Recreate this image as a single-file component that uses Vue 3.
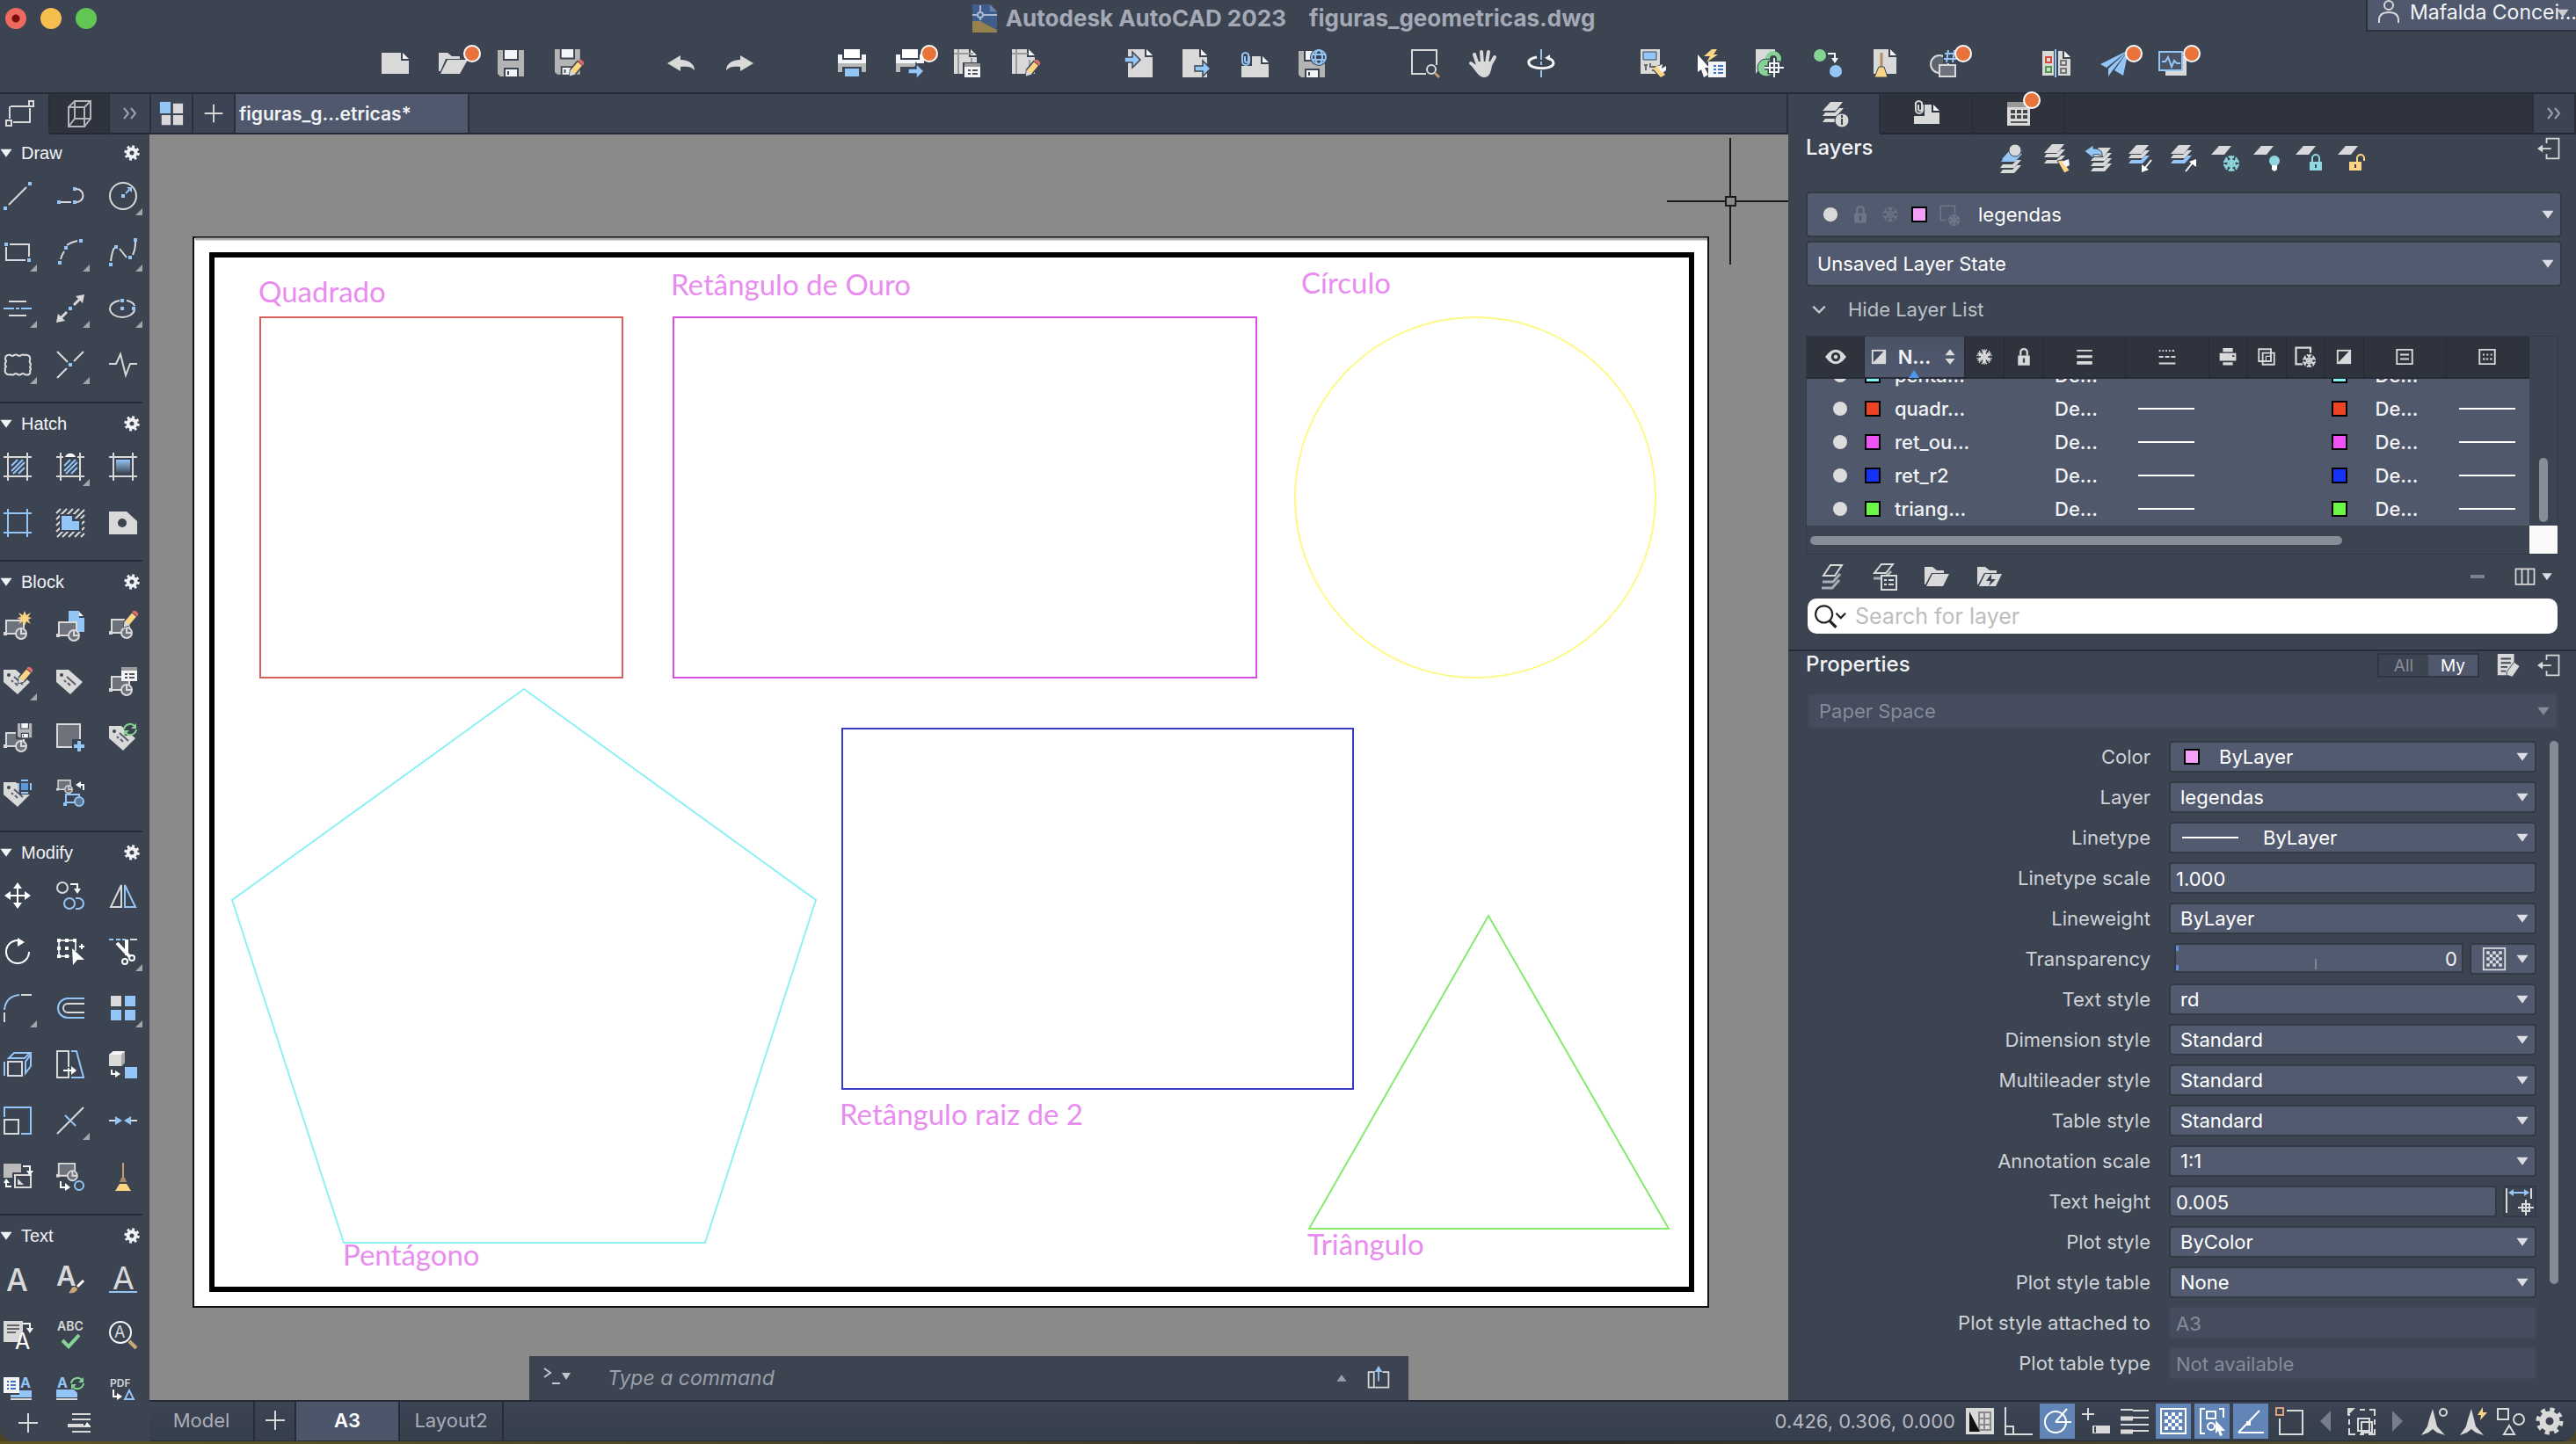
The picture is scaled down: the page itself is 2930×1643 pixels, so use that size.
<template>
  <div class="app">
    <header class="header">
      <div class="titlebar">
        <div class="lights">
          <button class="light red" aria-label="Close"></button>
          <button class="light yellow" aria-label="Minimize"></button>
          <button class="light green" aria-label="Zoom"></button>
        </div>
        <h1 class="title">
          <Icon name="dwg" />
          <span>Autodesk AutoCAD 2023</span>
          <span class="file">figuras_geometricas.dwg</span>
        </h1>
        <button class="user">
          <Icon name="user" />
          Mafalda Concei...
          <Icon name="down" class="user-arrow" />
        </button>
      </div>
      <nav class="toolbar">
        <div v-for="(group, i) in toolbar" :key="i" class="group">
          <button v-for="t in group" :key="t" class="tool" :aria-label="t">
            <Icon :name="t" />
            <span v-if="badges.includes(t)" class="badge"></span>
          </button>
        </div>
      </nav>
    </header>

    <div class="strip">
      <div class="strip-left">
        <button class="cell active" aria-label="Drafting"><Icon name="drafting" /></button>
        <button class="cell dark" aria-label="Modeling"><Icon name="modeling" /></button>
        <button class="cell more" aria-label="More"><Icon name="more" /></button>
      </div>
      <div class="strip-files">
        <button class="cell square" aria-label="Start"><Icon name="start" /></button>
        <button class="cell square" aria-label="New tab"><Icon name="plus" /></button>
        <button class="cell file-tab">figuras_g...etricas*</button>
        <div class="cell filler"></div>
      </div>
      <div class="strip-right">
        <button class="cell panel-tab active" aria-label="Layers"><Icon name="layersTab" /></button>
        <button class="cell panel-tab dark" aria-label="References"><Icon name="refsTab" /></button>
        <button class="cell panel-tab dark" aria-label="Content">
          <Icon name="contentTab" />
          <span class="badge tab-badge"></span>
        </button>
        <div class="cell filler dark"></div>
        <button class="cell more" aria-label="More"><Icon name="more" /></button>
      </div>
    </div>

    <div class="body">
      <aside class="sidebar">
        <section v-for="s in sections" :key="s.title" class="section">
          <div class="section-head">
            <button class="section-toggle" @click="s.open = !s.open">
              <Icon name="down" />{{ s.title }}
            </button>
            <button class="gear" aria-label="Settings"><Icon name="gear" /></button>
          </div>
          <div v-show="s.open" class="tools">
            <button v-for="t in s.tools" :key="t" class="tool" :aria-label="t">
              <Icon :name="t" />
              <span v-if="flyouts.includes(t)" class="flyout"></span>
            </button>
          </div>
        </section>
      </aside>

      <main class="canvas">
        <svg class="drawing" viewBox="0 0 1864 1440">
          <g transform="translate(-170 -153)">
            <rect x="220" y="270" width="1723" height="1217" fill="#fff" stroke="#111" stroke-width="2" />
            <path d="M222 272h1720" stroke="#b0aeb0" stroke-width="3" />
            <rect x="241" y="290" width="1683" height="1177" fill="none" stroke="#000" stroke-width="6" />
            <g fill="none" stroke-width="2">
              <rect x="296" y="361" width="412" height="410" stroke="#d9605a" />
              <rect x="766" y="361" width="663" height="410" stroke="#d94fe0" />
              <circle cx="1678" cy="566" r="205" stroke="#fdf98a" />
              <path d="M596 784L928 1024L802 1414H391L264 1024z" stroke="#8df1f4" />
              <rect x="958" y="829" width="581" height="410" stroke="#3a3cc4" />
              <path d="M1693 1042L1898 1398H1489z" stroke="#86ea6c" />
            </g>
            <g class="legend">
              <text v-for="l in legends" :key="l.text" :x="l.x" :y="l.y">{{ l.text }}</text>
            </g>
            <g fill="none" stroke="#1b1b1b" stroke-width="2">
              <path d="M1896 229h67M1974 229h60M1968 157v67M1968 234v67" />
              <rect x="1963" y="224" width="11" height="10" />
            </g>
          </g>
        </svg>
        <form class="command" @submit.prevent>
          <Icon name="prompt" class="prompt" />
          <input v-model="command" placeholder="Type a command" aria-label="Command" />
          <Icon name="up" class="cmd-up" />
          <Icon name="popout" />
        </form>
      </main>

      <aside class="panel">
        <div class="panel-head layers-head">
          <h2>Layers</h2>
          <div class="layer-tools">
            <button v-for="t in layerTools" :key="t" class="tool" :aria-label="t"><Icon :name="t" /></button>
          </div>
          <button class="pin" aria-label="Undock"><Icon name="undock" /></button>
        </div>

        <div class="combo tall">
          <Icon name="dot" class="st" />
          <Icon name="lockDim" class="st wide" />
          <Icon name="snowDim" class="st" />
          <span class="swatch" :style="{ background: '#f4a0f8' }"></span>
          <Icon name="vpDim" class="st vp" />
          <select aria-label="Current layer"><option>legendas</option></select>
          <Icon name="down" class="arrow" />
        </div>
        <div class="combo tall state">
          <select aria-label="Layer state"><option>Unsaved Layer State</option></select>
          <Icon name="down" class="arrow" />
        </div>
        <button class="hide-list"><Icon name="chevron" />Hide Layer List</button>

        <div class="layer-list">
          <table>
            <thead>
              <tr>
                <th v-for="c in columns" :key="c" :class="c" :aria-label="c">
                  <Icon :name="c" />
                  <template v-if="c === 'colName'"><span>N...</span><Icon name="sort" /></template>
                </th>
              </tr>
            </thead>
            <tbody>
              <tr v-for="l in layers" :key="l.name">
                <td class="vis"><i class="dot"></i></td>
                <td class="name"><span class="swatch" :style="{ background: l.color }"></span>{{ l.name }}</td>
                <td></td>
                <td></td>
                <td class="de">De...</td>
                <td class="ln"><i class="line"></i></td>
                <td></td>
                <td></td>
                <td></td>
                <td class="sw"><span class="swatch" :style="{ background: l.color }"></span></td>
                <td class="de">De...</td>
                <td class="ln"><i class="line"></i></td>
              </tr>
            </tbody>
          </table>
          <div class="vscroll"><i></i></div>
          <div class="hscroll"><i></i></div>
          <div class="corner"></div>
        </div>

        <div class="list-actions">
          <button class="tool" aria-label="New layer"><Icon name="newLayer" /></button>
          <button class="tool" aria-label="Layer settings"><Icon name="layerSettings" /></button>
          <button class="tool" aria-label="New group"><Icon name="folder" /></button>
          <button class="tool" aria-label="New dynamic group"><Icon name="folderFlash" /></button>
          <button class="tool minus" aria-label="Remove"><Icon name="minus" /></button>
          <button class="cols" aria-label="Columns"><Icon name="cols" /><Icon name="down" class="arrow" /></button>
        </div>

        <div class="search">
          <Icon name="search" />
          <input v-model="query" type="text" placeholder="Search for layer" aria-label="Search for layer" />
        </div>

        <div class="panel-head props-head">
          <h2>Properties</h2>
          <div class="toggle">
            <button>All</button>
            <button class="on">My</button>
          </div>
          <button class="tool" aria-label="Customize"><Icon name="customize" /></button>
          <button class="pin" aria-label="Undock"><Icon name="undock" /></button>
        </div>
        <div class="combo off space">
          <select disabled aria-label="Selection"><option>Paper Space</option></select>
          <Icon name="down" class="arrow" />
        </div>

        <div class="props">
          <div class="prop-list">
            <div v-for="(p, i) in props" :key="p.label" class="prop">
              <label :for="'prop-' + i">{{ p.label }}</label>
              <div class="field">
                <div v-if="p.kind === 'select'" class="combo">
                  <span v-if="p.swatch" class="swatch lead" :style="{ background: p.swatch }"></span>
                  <i v-if="p.line" class="line lead"></i>
                  <select :id="'prop-' + i"><option>{{ p.value }}</option></select>
                  <Icon name="down" class="arrow" />
                </div>
                <template v-else-if="p.kind === 'range'">
                  <div class="slider">
                    <input :id="'prop-' + i" v-model="transparency" type="range" min="0" max="90" />
                    <output>{{ transparency }}</output>
                  </div>
                  <button class="checker" aria-label="Transparency mode">
                    <Icon name="checker" /><Icon name="down" class="arrow" />
                  </button>
                </template>
                <template v-else>
                  <input :id="'prop-' + i" v-model="p.value" class="text" type="text" :disabled="p.off" />
                  <button v-if="p.pick" class="pick" aria-label="Pick distance"><Icon name="pickDist" /></button>
                </template>
              </div>
            </div>
          </div>
          <div class="props-scroll"><i></i></div>
        </div>
      </aside>
    </div>

    <footer class="footer">
      <div class="side-actions">
        <button class="tool" aria-label="Add tool set"><Icon name="plusBig" /></button>
        <button class="tool" aria-label="Menu"><Icon name="list" /></button>
      </div>
      <div class="status">
        <button class="layout model">Model</button>
        <button class="layout add" aria-label="New layout"><Icon name="plus" /></button>
        <button class="layout current">A3</button>
        <button class="layout">Layout2</button>
        <span class="coords">0.426, 0.306, 0.000</span>
        <div class="modes">
          <button
            v-for="m in modes"
            :key="m"
            class="mode"
            :class="{ on: activeModes.includes(m), small: m === 'prev' || m === 'next' }"
            :aria-label="m"
          >
            <Icon :name="m" />
          </button>
        </div>
      </div>
    </footer>
    <div class="wallpaper"></div>
  </div>
</template>

<script setup>
import { h, ref } from 'vue'

// palette shared by the icons
const G = '#d9d9d9'
const B = '#94c5f7'
const W = '#f4f5f8'
const Y = '#fbd584'
const N = '#3c4452'
const GR = '#86d493'
const C = '#8fd8e0'

const para = (x, y, c = G) => `<path d="M${x + 9} ${y}h14l-8 10h-15z" fill="${c}"/>`
const fold = (x, y, c = G) =>
  `<path d="M${x + 19} ${y}h5l-8 9h-16l3-4h11z" fill="${c}"/>`
const page = (x, y, w, hh, c = G) =>
  `<path d="M${x} ${y}h${w - 9}v9h9v${hh - 9}h-${w}z" fill="${c}"/><path d="M${x + w - 7} ${y}l7 7h-7z" fill="${W}"/>`
const pencil = (x, y) =>
  `<g transform="translate(${x} ${y}) rotate(40)"><path d="M-4 0h8v13l-4 6l-4-6z" fill="${Y}" stroke="${N}" stroke-width="1.5"/><path d="M-4 13h8l-4 6z" fill="${G}"/><path d="M-4 0a4 4 0 0 1 8 0z" fill="#dd6b66"/></g>`
const sq = (x, y, c = B) => `<path d="M${x - 2} ${y - 2}h4v4h-4z" fill="${c}"/>`
const line = (d, c = G, w = 2) => `<path d="${d}" fill="none" stroke="${c}" stroke-width="${w}"/>`
// six-armed snowflake, each arm with a small fork
const snow = (x, y, r, c) =>
  [0, 60, 120, 180, 240, 300]
    .map((a) => `<path transform="translate(${x} ${y}) rotate(${a})" d="M0 0V-${r}M-${r * 0.35} -${r * 0.95}L0 -${r * 0.6}L${r * 0.35} -${r * 0.95}" fill="none" stroke="${c}" stroke-width="2"/>`)
    .join('') + `<circle cx="${x}" cy="${y}" r="${r * 0.42}" fill="none" stroke="${c}" stroke-width="2"/>`
const lock = (x, y, c, open = 0) =>
  `<path d="M${x} ${y + 8}h14v10h-14z" fill="${c}"/>` +
  line(open ? `M${x + 9} ${y + 8}v-4a4 4 0 0 1 8 0v3` : `M${x + 3} ${y + 8}v-4a4 4 0 0 1 8 0v4`, c) +
  line(`M${x + 7} ${y + 11}v4`, N)
const bigLock = (c) =>
  `<path d="M7 14h18v15H7z" fill="${c}"/>` + line('M11 14V9a5 5 0 0 1 10 0v5', c, 3) + line('M16 18v7', N, 3)
const floppy = (x, y, s = 1) =>
  `<g transform="translate(${x} ${y}) scale(${s})"><path d="M0 0h30v30H3l-3-3z" fill="#b4b4b4"/><path d="M6 0h18v12H6zM7 20h17v10H7z" fill="${N}"/><path d="M8 0h14v10H8zM9 22h13v8H9z" fill="${W}"/><path d="M11 24h2v4h-2z" fill="${N}"/></g>`
const printer = (y) =>
  `<path d="M0 6h32v20H0z" fill="${W}"/><path d="M0 16h32v10H0z" fill="#b8b8b8"/><path d="M5 0h22v12H5zM5 20h22v12H5z" fill="${N}"/><path d="M7 0h18v10H7z" fill="#fff"/>` + y
const arrowR = (x, y, c = B) =>
  `<path d="M${x} ${y - 3}h9v-6l9 9l-9 9v-6h-9z" fill="${c}" stroke="${N}" stroke-width="1.5"/>`
const block = (x, y) =>
  `<g transform="translate(${x} ${y})"><path d="M3 1h20v15H3z" fill="#6d727d" stroke="${G}" stroke-width="2"/><path d="M0 14h4v4H0z" fill="${G}"/><circle cx="20" cy="16" r="6" fill="#6d727d" stroke="${G}" stroke-width="2"/>${line('M20 10v6h6', G)}</g>`
const tag =
  `<path d="M0 3h14L30 17L16 31L0 17z" fill="${G}"/><circle cx="6" cy="9" r="2" fill="${N}"/>` +
  line('M12 11l10 9M9 15l2 2M13 18l3 3', '#5b5f68')
const hashBox = (c = G) => line('M5 0v32M27 0v32M0 5h32M0 27h32', c)
const hatch = line('M9 15l7-7M9 21l13-13M11 24l13-13M17 24l7-7', B, 2)
const clip = (x, y, c) =>
  line(`M${x + 9} ${y + 6}v6a4 4 0 0 1-8 0v-8a4 4 0 0 1 7 0v7a2 2 0 0 1-4 0v-5`, c)
const listBox = (x, y) =>
  `<path d="M${x} ${y}h18v16h-18z" fill="${W}"/><path d="M${x} ${y}h18v4h-18z" fill="#9a9a9a"/>` +
  line(`M${x + 4} ${y + 8}h3M${x + 9} ${y + 8}h6M${x + 4} ${y + 12}h3M${x + 9} ${y + 12}h6`, '#555')
const turn = (x, y) =>
  line(`M${x} ${y}h8v6`, W) + `<path d="M${x + 4} ${y + 5}h8l-4 6z" fill="${W}"/>`
const glyph = (x, y, size, t, c = G, extra = '') =>
  `<text x="${x}" y="${y}" font-family="Inter, sans-serif" font-size="${size}" fill="${c}" ${extra}>${t}</text>`
const compass = `<path d="M15 2l3 12l2 8l9 10l-9-3l-5-4l-5 4l-8 3l7-10l2-8z" fill="${G}"/>`
const sync = (x, y) =>
  `<g transform="translate(${x} ${y})">${line('M1 7a7 7 0 0 1 12-4M15 7a7 7 0 0 1-12 4', GR)}<path d="M15 0v6H9zM1 14V8h6z" fill="${GR}"/></g>`

const icons = {
  dwg: `<path d="M2 1h20l8 8v12H2z" fill="#3f5d8c"/><path d="M22 1l8 8h-8z" fill="#6c84a6"/><path d="M2 20h9l19 10v3H2z" fill="#95824f"/><path d="M14 21h16v9z" fill="#3f5d8c"/>${line('M11 2v17M2 13h28', '#a8b9d0')}<circle cx="11" cy="13" r="3" fill="#3f5d8c" stroke="#a8b9d0" stroke-width="2"/>`,
  user: `<circle cx="16" cy="8" r="5" fill="none" stroke="${G}" stroke-width="2"/>${line('M5 28v-3c0-6 4-9 11-9s11 3 11 9v3')}`,
  down: `<path d="M1 6h30L16 27z" fill="currentColor"/>`,
  up: `<path d="M1 26h30L16 6z" fill="currentColor"/>`,
  more: line('M9 10l5 6l-5 6M17 10l5 6l-5 6', '#9da1aa'),
  New: page(1, 4, 31, 24),
  Open: `<path d="M0 4h10l5 4h9v3H8L2 25H0z" fill="${G}"/><path d="M10 12h23l-9 16H2z" fill="${G}"/>`,
  Save: floppy(1, 1),
  'Save as': floppy(0, 0, 0.96) + pencil(29, 16),
  Undo: `<path d="M0 16L15 7v5c10 0 16 5 16 12c-3-4-8-5-16-4v5z" fill="${G}"/>`,
  Redo: `<path d="M32 16L17 7v5C7 12 1 17 1 24c3-4 8-5 16-4v5z" fill="${G}"/>`,
  Print: printer(`<path d="M8 22h16v9H8z" fill="${B}"/>`),
  'Batch plot': printer(`<path d="M24 16h8v16H12z" fill="${N}"/>` + arrowR(14, 25)),
  'Page setup': page(0, 0, 26, 28) + line('M0 5h22M5 0v28M20 10v6', '#9a9a9a') + `<path d="M10 15h22v17H10z" fill="${N}"/>` + listBox(12, 16),
  'Edit sheet': page(0, 0, 26, 28) + line('M0 5h18M5 0v28M20 12v14', '#9a9a9a') + pencil(28, 16),
  Import: page(4, 0, 28, 32) + arrowR(0, 12),
  Export: page(0, 0, 28, 32) + arrowR(14, 22),
  Attach: page(1, 8, 31, 24) + `<path d="M0 0h13v19H0z" fill="${N}"/>` + clip(1, 2, B),
  'Save web': floppy(0, 2) + `<circle cx="23" cy="9" r="10" fill="${N}"/><circle cx="23" cy="9" r="8" fill="none" stroke="${B}" stroke-width="2"/><ellipse cx="23" cy="9" rx="4" ry="8" fill="none" stroke="${B}" stroke-width="2"/>${line('M15 6h16M15 12h16', B)}`,
  'Zoom window': line('M17 28H1V1h28v17') + `<circle cx="23" cy="23" r="5" fill="none" stroke="${G}" stroke-width="2"/>` + line('M27 27l5 5', '#c69c6d', 3),
  Pan: `<g stroke="${G}" stroke-width="4" stroke-linecap="round" fill="none"><path d="M10 18L6 6M15 16L14 3M20 16L22 3M24 18L29 9M10 22L2 16"/></g><path d="M8 14h17l1 4c-1 8-3 14-9 14c-5 0-8-5-15-14l2-2l5 3z" fill="${G}"/>`,
  Orbit: line('M16 0v12M16 14v4M16 24v8', B) + line('M11 9C4 10 1 13 2 16c1 7 27 8 28 0c0-3-3-5-7-6', W, 3) + `<path d="M20 10l6-4v7z" fill="${W}"/>`,
  Calculator: `<path d="M1 0h22v28H1z" fill="${G}"/><path d="M4 3h15v9H4z" fill="${B}" stroke="${N}"/>${line('M5 18h4M7 18v6M12 16v4h6M14 24h5', '#666')}<path d="M16 20l12-4l4 4l-9 12l-7-7z" fill="${N}"/><path d="M15 22l6-4l8 11l-5 3z" fill="${Y}"/><path d="M20 20l6-3l-1 5l5-3v5l-4 3z" fill="${W}"/>`,
  'Quick select': `<path d="M16 0h6l-4 6h5L10 15l4-7H7z" fill="${Y}"/><path d="M12 14h20v18H12z" fill="${W}"/>${line('M18 19h3M23 19h6M18 23h3M23 23h6M18 27h3M23 27h6', '#3f74c4')}<path d="M0 6l13 15H8l4 8l-5 3l-3-9l-4 3z" fill="#fff"/>`,
  Point: `<path d="M0 0h22v10H12L0 28z" fill="${G}"/><circle cx="20" cy="11" r="9" fill="${GR}"/><circle cx="12" cy="21" r="10" fill="${GR}" stroke="${N}"/><circle cx="20" cy="11" r="4" fill="${N}"/>${line('M21 10v22M10 21h22M16 16h10v10H16z', N, 5)}${line('M21 10v22M10 21h22M16 16h10v10H16z', W)}`,
  Match: `<circle cx="7" cy="7" r="7" fill="${GR}"/><circle cx="25" cy="25" r="7" fill="${B}"/>` + turn(16, 5),
  Purge: page(2, 0, 26, 28) + line('M11 4v16', '#b28b5e', 3) + `<path d="M8 20h6l4 12H3z" fill="${Y}" stroke="${N}"/>`,
  Count: `<circle cx="11" cy="17" r="10" fill="#5d6470" stroke="${G}" stroke-width="2"/><path d="M11 18h18v13H11z" fill="#6d727d" stroke="${G}" stroke-width="2"/><path d="M15 0h17v16H15z" fill="${N}"/>${line('M21 1l-2 14M28 1l-2 14M17 5h14M16 11h14', B)}`,
  Compare: `<path d="M0 2h13v28H0z" fill="${G}"/>` + page(18, 2, 14, 28) + line('M15 0v32', B) + line('M4 9h6v6H4z', '#d64a3c') + line('M4 20h6v6H4z', '#4d9c49') + line('M21 13h6v5h-6zM21 22h6v5h-6z', '#777'),
  Share: `<path d="M32 1L0 17l7 4zM32 1L9 22v9l5-7zM32 1L16 24l10 6z" fill="${B}"/>`,
  Activity: `<path d="M8 8h24v22H8z" fill="${G}"/><path d="M1 3h26v21H1z" fill="#4a5466" stroke="${B}" stroke-width="2"/>${line('M4 14h4l3-5l4 11l3-7l3 3h4', B)}`,
  drafting: line('M5 8h21M8 26h19V10M4 8v14') + line('M0 24h6v6H0zM26 2h5v6h-5z'),
  modeling: line('M4 9h18v22H4zM11 2h18v20H11zM4 9l7-7M22 9l7-7M22 31l7-9M4 31l7-9', '#b3b5ba'),
  start: `<path d="M2 2h13v14H2z" fill="${B}"/><path d="M18 4h12v12H18zM4 18h11v12H4zM18 18h12v12H18z" fill="${G}"/>`,
  plus: line('M16 5v22M5 16h22'),
  layersTab: para(3, 3) + fold(3, 10) + fold(3, 17) + `<ellipse cx="25" cy="24" rx="8" ry="8" fill="${G}" stroke="${N}"/>` + line('M25 18v3M25 22v7', N),
  refsTab: page(2, 6, 29, 22) + `<path d="M1 0h13v19H1z" fill="#2f333e"/>` + clip(3, 0, G),
  contentTab: `<path d="M3 3h26v27H3z" fill="${G}"/><path d="M3 3h26v6H3z" fill="#999"/>${line('M7 14h5M14 14h5M21 14h5M7 20h5M14 20h5M21 20h5', '#444', 4)}${line('M7 26h19', '#555')}`,
  gear: `<circle cx="16" cy="16" r="8" fill="none" stroke="currentColor" stroke-width="7"/><circle cx="16" cy="16" r="13" fill="none" stroke="currentColor" stroke-width="5" stroke-dasharray="5.1 5.1"/>`,
  prompt: line('M3 5l7 5l-7 5M12 22h9', '#c0c4cc') + `<path d="M23 10h10l-5 8z" fill="#c0c4cc"/>`,
  popout: line('M11 8H3v20h26V8h-8M10 8v20', G) + line('M16 20V6', B) + `<path d="M11 8h10l-5-8z" fill="${B}"/>`,

  Line: line('M6 26L26 6') + sq(2, 30) + sq(30, 2),
  Polyline: line('M5 23h12M24 8h-1a7 7 0 0 1 0 15h-1') + sq(3, 23) + sq(21, 23) + sq(21, 8),
  Circle: `<circle cx="16" cy="16" r="15" fill="none" stroke="${G}" stroke-width="2"/>` + sq(16, 16) + line('M19 13l5-5', B) + `<path d="M20 6h6v6z" fill="${B}"/>`,
  Rectangle: line('M7 7h22v14M25 25H3V10') + sq(3, 7) + sq(29, 25),
  Arc: line('M5 24c1-4 2-6 4-9M12 8c4-3 7-4 12-5') + sq(4, 28) + sq(11, 11) + sq(28, 3),
  Spline: line('M2 26c1-7 2-12 4-15M12 12l8 10M27 19c2-4 3-9 3-15') + sq(2, 30) + sq(8, 10) + sq(24, 22) + sq(30, 2),
  Centerline: line('M6 8h20M6 24h20') + line('M0 16h12M14 16h4M20 16h12', B),
  Xline: line('M4 28l8-8M20 12l8-8', G, 3) + `<path d="M0 32l2-10l8 8zM32 0l-2 10l-8-8z" fill="${G}"/>` + sq(16, 16),
  Ellipse: line('M12 7C5 8 1 12 1 16c0 6 7 10 14 10s13-4 14-8M20 7c5 1 8 3 9 6') + sq(15, 7) + sq(15, 16) + sq(28, 16),
  Cloud: line('M3 6q2-2 5-1q2 2 4 0q3-1 4 0q2 2 4 0q3-1 4 0q3-1 5 1q2 2 1 5q-1 2 1 4q0 2-1 4q2 2 0 4q1 3-1 4q-2 1-5 0q-2-2-4 0q-2 1-4 0q-2-2-4 0q-2 1-4 0q-3 1-5-1q-2-2-1-4q-1-2 1-4q-2-2-1-4q2-2 0-4q0-3 1-4z'),
  Trimline: line('M1 1l12 12M1 31l11-11M20 12L31 1') + sq(16, 16),
  Breakline: line('M0 15h8l5-11l6 24l5-13h8'),
  Hatch: hashBox() + hatch,
  'Hatch edit': hashBox() + hatch + `<path d="M8 2h16v5H8z" fill="${N}"/><path d="M11 3c3-3 7-3 10 0l1 2H10z" fill="#fff"/>`,
  Gradient: `<defs><linearGradient id="grad" x2="0" y2="1"><stop stop-color="${B}"/><stop offset="1" stop-color="${N}"/></linearGradient></defs><path d="M8 8h16v16H8z" fill="url(#grad)"/>` + hashBox(),
  Boundary: hashBox(B),
  Superhatch: `<g>${line('M0 5l5-5M0 12L12 0M0 19L19 0M0 26L26 0M1 32L32 1M7 32L32 7M14 32L32 14M21 32L32 21M28 32l4-4')}</g><path d="M4 6h17v5h8v15H4z" fill="${N}"/><path d="M6 8h12v6h8v10H6z" fill="${B}"/>`,
  Region: `<path d="M0 3h20l12 11v15H0z" fill="${G}"/><circle cx="15" cy="16" r="5" fill="${N}"/>`,
  'Create block': block(0, 10) + `<path d="M24 0l2 5l5-3l-3 5l4 1l-4 2l3 5l-5-3l-2 5l-2-5l-5 3l3-5l-5-2l5-1l-3-5l5 3z" fill="${Y}"/>`,
  'Insert block': `<path d="M14 0h12v8h6v16H14z" fill="${B}"/><path d="M26 1l5 5h-5z" fill="${W}"/>` + block(0, 12),
  'Edit block': block(0, 9) + pencil(29, 4),
  'Edit attribute': tag + pencil(29, 4),
  Attribute: tag,
  'Block manager': block(0, 10) + listBox(14, 0),
  'Write block': block(0, 10) + `<path d="M14 0h18v18H14z" fill="${N}"/>` + floppy(16, 0, 0.54),
  'Block base': `<path d="M1 1h26v26H1z" fill="#6d727d" stroke="${G}" stroke-width="2"/><path d="M18 18h14v14H18z" fill="${N}"/>` + line('M26 20v12M20 26h12', B, 4),
  'Sync attribute': tag + `<path d="M16 0h16v14H18z" fill="${N}"/>` + sync(16, 0),
  'Attribute display': tag + `<path d="M16 0h16v17H18z" fill="${N}"/><path d="M20 4h8v8h-8z" fill="#5c98d6"/>` + line('M20 1h8M20 15h8M17 4v8M31 4v8', B),
  'Replace block': `<g transform="scale(.7)">${block(0, 0)}</g><path d="M22 6l6-4v3h4v7h-2V7h-2v3z" fill="${W}"/>` + `<g transform="translate(8 16)">${line('M3 1h15v9H3z', B)}<path d="M0 10h4v4H0z" fill="${B}"/><circle cx="18" cy="9" r="5" fill="#5d7693" stroke="${B}" stroke-width="2"/></g>`,
  Move: line('M16 5v22M5 16h22', '#fff') + `<path d="M16 1l5 7H11zM16 31l5-7H11zM1 16l7-5v10zM31 16l-7-5v10z" fill="#fff"/>`,
  Copy: `<circle cx="7" cy="7" r="6" fill="none" stroke="${G}" stroke-width="2"/><circle cx="15" cy="25" r="6" fill="none" stroke="${B}" stroke-width="2"/>` + line('M22 19h3a6 6 0 0 1 0 12h-3', B) + turn(16, 3),
  Mirror: line('M14 4v25H2z') + line('M18 4v25h12z', B),
  Rotate: line('M29 16a13 13 0 1 1-13-13', '#fff') + `<path d="M16 0l8 5l-8 5z" fill="#fff"/>`,
  Select: line('M3 3h19v12M3 3v18h12') + [[3, 3], [12, 3], [21, 3], [3, 12], [12, 12], [3, 21], [12, 21]].map(([x, y]) => sq(x, y, '#fff')).join('') + line('M29 7v6M26 10h6', '#fff') + `<path d="M18 12l14 13h-8l-5 6z" fill="#fff"/>`,
  Trim: line('M0 2h5M8 2h5M15 2h4', B) + line('M24 2h8') + `<path d="M18 2h4v18h-4z" fill="#fff"/>` + line('M9 6l15 16', '#fff', 4) + `<circle cx="18" cy="27" r="3" fill="none" stroke="#fff" stroke-width="2"/><circle cx="26" cy="23" r="3" fill="none" stroke="#fff" stroke-width="2"/>`,
  Fillet: line('M1 18C2 8 8 2 18 1', B) + line('M20 1h12M1 21v11'),
  Offset: line('M32 5H13a11 11 0 0 0 0 22h19', B) + line('M32 11H13a5 5 0 0 0 0 10h19'),
  Array: `<path d="M2 2h12v12H2z" fill="${G}"/><path d="M18 2h12v12H18zM2 18h12v12H2zM18 18h12v12H18z" fill="${B}"/>`,
  'Copy 3D': line('M5 13h16v16H5z') + line('M1 13v16M12 3h18l-6 6H6zM31 5v13l-6 8V13z', B),
  Stretch: line('M14 20v11H1V1h13v18') + line('M17 1h6l8 30H17', B) + line('M8 23h11', '#fff') + `<path d="M17 18l6 5l-6 5z" fill="#fff"/>`,
  Flatten: `<path d="M0 5l5-4h13v13l-4 4H0z" fill="${G}"/><path d="M0 5l5-4h13l-4 4z" fill="${W}"/><path d="M18 1v13l-4 4V5z" fill="#a9a9a9"/><path d="M18 19h14v13H18z" fill="${B}"/>` + line('M3 22v5h5', '#fff') + `<path d="M7 23l6 4l-6 4z" fill="#fff"/>`,
  Scale: line('M1 15h16v16H1z') + line('M1 12V1h30v30H20', B),
  Break: line('M1 31L31 1') + line('M10 10l12 12', B),
  Join: line('M0 16h8M24 16h8') + `<path d="M7 11l8 5l-8 5zM25 11l-8 5l8 5z" fill="${B}"/>`,
  'Draw order': `<path d="M0 1h20v16H0z" fill="#bbb"/><path d="M10 11h22v18H10z" fill="${N}"/>` + line('M13 14h18v14H13z') + `<path d="M16 18l7 7h-7z" fill="${G}"/>` + turn(22, 4) + line('M9 27H3v-5', '#fff') + `<path d="M0 23h7l-4-5z" fill="#fff"/>`,
  'Change space': `<g transform="scale(.92)">${block(0, 0)}</g><circle cx="26" cy="26" r="5" fill="none" stroke="${B}" stroke-width="2"/>` + line('M5 21v7h6', '#fff') + `<path d="M10 23l6 5l-6 4z" fill="#fff"/>`,
  Overkill: line('M16 0v18', '#c69c6d') + `<path d="M14 17h4l2 5h-8z" fill="#a98a66"/><path d="M12 24h8l5 8H7z" fill="${Y}"/>`,
  'Single text': glyph(3, 30, 35, 'A', G, 'font-weight="500"'),
  'Text style': glyph(0, 24, 31, 'A', G, 'font-weight="600"') + line('M24 25l7-7', '#fff', 3) + `<path d="M14 32c3-2 2-7 7-7l3 2c0 4-5 6-10 5z" fill="#c9a676"/>`,
  'Multiline text': glyph(4, 28, 36, 'A') + line('M0 31h32', B),
  'Text to mtext': `<path d="M0 0h22v24H0z" fill="${G}"/>${line('M4 5h14M4 9h14M4 13h10', '#666')}<path d="M22 12l-9 20h19z" fill="${N}"/>` + glyph(13, 32, 25, 'A', '#fff') + turn(22, 3),
  Spell: glyph(1, 11, 14, 'ABC', G, 'font-weight="600"') + line('M7 22l7 7L26 16', GR, 4),
  'Find text': `<circle cx="13" cy="13" r="12" fill="none" stroke="${W}" stroke-width="2"/>` + glyph(6, 19, 18, 'A', G) + line('M23 23l8 8', '#c9a676', 4),
  Field: `<path d="M18 15h14v8H8v-3h10z" fill="${B}"/><path d="M0 0h18v18H0z" fill="${W}"/>${line('M4 5h2M8 5h6M4 9h2M8 9h6M4 13h2M8 13h6', '#3f74c4')}` + glyph(19, 12, 16, 'A', B, 'font-weight="700"') + line('M8 25h24'),
  'Update field': `<path d="M0 14h20l4 4v5H0z" fill="${B}"/>` + glyph(1, 12, 16, 'A', B, 'font-weight="700"') + sync(16, 0) + line('M0 25h24'),
  'PDF text': glyph(1, 11, 12, 'PDF', G, 'font-weight="600"') + line('M5 14v8h6', '#fff') + `<path d="M9 18l6 4l-6 4z" fill="#fff"/>` + line('M23 15l-5 10h10z', B),

  'Layer state': fold(0, 18) + fold(0, 24) + para(2, 7, B) + fold(1, 11, B) + `<circle cx="17" cy="7" r="7" fill="${G}" stroke="${N}"/>`,
  'Match layer': para(2, 0) + fold(2, 6) + fold(2, 13) + `<path d="M17 19l6-1l8 12l-6 3z" fill="${Y}" stroke="${N}"/><path d="M22 20l8-3l1 7l-4 2z" fill="${W}"/>`,
  'Previous layer': para(7, 4) + fold(7, 10) + fold(7, 16) + fold(7, 22) + `<path d="M0 8l10-7v4c8 0 11 4 10 10c-2-3-5-4-10-3v4z" fill="${B}" stroke="${N}"/>`,
  Isolate: para(2, 1) + fold(2, 7) + fold(2, 13, B) + line('M28 18l-8 10', '#fff') + `<path d="M17 32v-9l8 6z" fill="#fff"/>`,
  Unisolate: para(2, 1) + fold(2, 7) + fold(2, 13, B) + line('M19 31l8-10', '#fff') + `<path d="M31 17v9l-8-6z" fill="#fff"/>`,
  Freeze: para(0, 2) + snow(23, 22, 9, C),
  Off: para(0, 2) + `<circle cx="24" cy="19" r="6" fill="${C}"/><path d="M21 24h6v5l-3 2l-3-2z" fill="#fff"/>`,
  Lock: para(0, 2) + lock(16, 12, C),
  Unlock: para(0, 2) + lock(13, 12, Y, 1),
  undock: line('M12 9V3h16v26H12v-6M3 16h15') + `<path d="M0 16l7-5v10z" fill="${G}"/>`,
  dot: `<circle cx="16" cy="16" r="13" fill="${G}"/>`,
  lockDim: '<g opacity=".25">' + bigLock('#c5cad6') + '</g>',
  snowDim: '<g opacity=".25">' + snow(16, 16, 14, '#c5cad6') + '</g>',
  vpDim: '<g opacity=".25">' + line('M12 24H4V4h20v10', '#c5cad6') + snow(23, 24, 8, '#c5cad6') + '</g>',
  chevron: line('M4 10l12 12l12-12', '#c3c6cd', 4),
  colOn: `<path d="M0 16Q16-6 32 16Q16 38 0 16z" fill="${G}"/><circle cx="16" cy="16" r="7" fill="#2f333e"/><circle cx="16" cy="16" r="3" fill="${G}"/>`,
  colName: `<path d="M3 3h26v26H3z" fill="${G}"/><path d="M6 6h19L6 26z" fill="#424b5e"/>`,
  sort: `<path d="M7 13h18L16 2zM7 19h18l-9 11z" fill="${G}"/>`,
  colFreeze: snow(16, 16, 14, G) + snow(16, 16, 10, G),
  colLock: bigLock(G),
  colWeight: `<path d="M2 3h28v3H2zM2 13h28v5H2zM2 24h28v6H2z" fill="${G}"/>`,
  colType: line('M1 5h3M7 5h3M13 5h3M19 5h3M25 5h4M1 16h8M12 16h8M23 16h8M1 28h30', G, 3),
  colPlot: `<path d="M7 0h18v7H7zM1 9h30v14H1zM7 26h18v5H7z" fill="${G}"/><path d="M24 13h4v3h-4z" fill="${N}"/>`,
  colVp: line('M2 2h22v22H2zM9 9h21v21H9z', G, 3) + line('M15 15h9v9h-9z', G),
  colVpFreeze: line('M12 27H2V2h22v8', G, 3) + snow(22, 22, 10, G),
  colVpColor: `<path d="M3 3h26v26H3z" fill="${G}"/><path d="M6 6h19L6 26z" fill="#2f333e"/>`,
  colDesc: line('M2 3h28v26H2zM8 12h16M8 20h16', G, 3),
  colMore: line('M2 3h28v26H2zM8 12h3M15 12h3M22 12h3M8 20h4M14 20h4M21 20h4', G, 3),
  newLayer: line('M15 3h13l-8 12H7z') + line('M26 13l-8 9H6M25 20l-8 9H5', '#a9adb5', 3),
  layerSettings: line('M13 2h13l-8 10H5z') + line('M24 10l-8 8H4', '#a9adb5', 3) + `<path d="M13 15h17v16H13z" fill="${N}" stroke="${G}" stroke-width="2"/>` + line('M16 20h3M21 20h6M16 25h3M21 25h6'),
  folder: `<path d="M2 5h9l5 4h8v3H10L3 25H2z" fill="${G}"/><path d="M11 13h19l-7 14H4z" fill="${G}"/>`,
  folderFlash: `<path d="M2 5h9l5 4h8v3H10L3 25H2z" fill="${G}"/><path d="M11 13h19l-7 14H4z" fill="${G}"/><path d="M18 13l-6 8h5l-2 6l8-8h-5z" fill="${N}"/>`,
  minus: `<path d="M8 14h16v4H8z" fill="#7b818c"/>`,
  cols: line('M4 6h24v20H4zM12 6v20M20 6v20'),
  search: `<circle cx="10" cy="14" r="9" fill="none" stroke="#222" stroke-width="2"/>` + line('M16 21l7 7', '#222', 3) + line('M23 13l5 5l5-5', '#222'),
  customize: `<path d="M3 2h20v12l-8 14H3z" fill="${G}"/>${line('M7 8h12M7 13h12M7 18h8M7 23h6', N)}<path d="M23 12l7 5l-9 13l-7-2v-4z" fill="${G}" stroke="${N}"/>`,
  checker: `<path d="M2 2h28v28H2z" fill="none" stroke="currentColor" stroke-width="2"/><path d="M6 6h4v4H6zM14 6h4v4h-4zM22 6h4v4h-4zM10 10h4v4h-4zM18 10h4v4h-4zM6 14h4v4H6zM14 14h4v4h-4zM22 14h4v4h-4zM10 18h4v4h-4zM18 18h4v4h-4zM6 22h4v4H6zM14 22h4v4h-4zM22 22h4v4h-4z" fill="currentColor"/>`,
  pickDist: line('M1 1v28M29 1v12') + line('M5 6h20', B) + `<path d="M3 6l6-4v8zM27 6l-6-4v8z" fill="${B}"/>` + line('M23 14v18M14 23h18M19 19h8v8h-8z'),
  plusBig: line('M16 5v22M5 16h22'),
  list: line('M6 6h21M6 12h21M6 20h21M6 26h21') + `<path d="M1 17h18v4H1z" fill="${G}"/><path d="M20 20h7l-4-5z" fill="${W}"/>`,

  model: `<path d="M0 1h32v30H0z" fill="${G}"/>${line('M15 6h13v20H15zM21 6v20M15 13h13M15 20h13', '#8a8a8a')}<path d="M4 5l12 23H4z" fill="#111"/>`,
  ortho: line('M1 0v31h31M1 22h9v9'),
  polar: `<circle cx="14" cy="17" r="12" fill="none" stroke="#fff" stroke-width="2"/>` + line('M14 17h18M14 17L27 2', '#fff'),
  dynamic: line('M7 1v14M0 8h14') + `<path d="M12 21h20v9H12z" fill="${G}"/>` + line('M15 22v7', N),
  weight: line('M0 3h14M14 4h18') + line('M0 13h14M0 28h14', G, 5) + line('M14 12h18M14 27h18M0 20h32'),
  snap: line('M8 2H3v28h5M24 2h5v10M10 5h10v8H10z', '#fff') + `<circle cx="15" cy="22" r="4" fill="none" stroke="#fff" stroke-width="2"/><path d="M20 15l11 12h-5l2 5l-3 1l-2-6l-3 3z" fill="#fff"/>`,
  track: line('M2 29h29M2 29L26 4M9 22', '#fff') + `<path d="M11 16h5v5h-5z" fill="#fff"/>`,
  ucs: line('M13 4h18v27H5V13') + line('M1 1h8v8H1z', '#dfa07c'),
  prev: `<path d="M22 4v24L10 16z" fill="#777d89"/>`,
  viewport: line('M2 10V8M2 14v6M2 24v7h7M14 31h5M24 31h7v-6M31 20v-6M31 10V3h-6M20 3h-6') + line('M12 13h13v14H12zM16 17h12v12H16z') + `<path d="M0 1h9L0 10z" fill="${G}"/>`,
  next: `<path d="M10 4v24l12-12z" fill="#777d89"/>`,
  annoVis: compass + `<circle cx="27" cy="6" r="4" fill="none" stroke="${G}" stroke-width="2"/>`,
  annoAuto: compass + `<path d="M28 0l-6 9h4l-1 6l8-9h-5z" fill="${Y}"/>`,
  iso: line('M1 2h12v12H1zM14 21l6 10H8z') + `<circle cx="25" cy="14" r="6" fill="none" stroke="${G}" stroke-width="2"/>`,
}
icons.checkerMode = icons.checker

const Icon = (p) => h('svg', { viewBox: '0 0 32 32', class: 'icon', 'aria-hidden': 'true', innerHTML: icons[p.name] })
Icon.props = ['name']

const toolbar = [
  ['New', 'Open', 'Save', 'Save as'],
  ['Undo', 'Redo'],
  ['Print', 'Batch plot', 'Page setup', 'Edit sheet'],
  ['Import', 'Export', 'Attach', 'Save web'],
  ['Zoom window', 'Pan', 'Orbit'],
  ['Calculator', 'Quick select', 'Point', 'Match', 'Purge', 'Count'],
  ['Compare', 'Share', 'Activity'],
]
const badges = ['Open', 'Batch plot', 'Count', 'Share', 'Activity']

const sections = ref([
  {
    title: 'Draw',
    open: true,
    tools: ['Line', 'Polyline', 'Circle', 'Rectangle', 'Arc', 'Spline', 'Centerline', 'Xline', 'Ellipse', 'Cloud', 'Trimline', 'Breakline'],
  },
  {
    title: 'Hatch',
    open: true,
    tools: ['Hatch', 'Hatch edit', 'Gradient', 'Boundary', 'Superhatch', 'Region'],
  },
  {
    title: 'Block',
    open: true,
    tools: ['Create block', 'Insert block', 'Edit block', 'Edit attribute', 'Attribute', 'Block manager', 'Write block', 'Block base', 'Sync attribute', 'Attribute display', 'Replace block'],
  },
  {
    title: 'Modify',
    open: true,
    tools: ['Move', 'Copy', 'Mirror', 'Rotate', 'Select', 'Trim', 'Fillet', 'Offset', 'Array', 'Copy 3D', 'Stretch', 'Flatten', 'Scale', 'Break', 'Join', 'Draw order', 'Change space', 'Overkill'],
  },
  {
    title: 'Text',
    open: true,
    tools: ['Single text', 'Text style', 'Multiline text', 'Text to mtext', 'Spell', 'Find text', 'Field', 'Update field', 'PDF text'],
  },
])
const flyouts = ['Circle', 'Rectangle', 'Arc', 'Spline', 'Centerline', 'Xline', 'Ellipse', 'Cloud', 'Trimline', 'Hatch edit', 'Edit attribute', 'Trim', 'Fillet', 'Array', 'Break']

const legends = [
  { text: 'Quadrado', x: 294, y: 344 },
  { text: 'Retângulo de Ouro', x: 763, y: 336 },
  { text: 'Círculo', x: 1480, y: 334 },
  { text: 'Retângulo raiz de 2', x: 955, y: 1280 },
  { text: 'Pentágono', x: 390, y: 1440 },
  { text: 'Triângulo', x: 1487, y: 1428 },
]

const command = ref('')
const query = ref('')
const transparency = ref(0)

const layerTools = ['Layer state', 'Match layer', 'Previous layer', 'Isolate', 'Unisolate', 'Freeze', 'Off', 'Lock', 'Unlock']
const columns = ['colOn', 'colName', 'colFreeze', 'colLock', 'colWeight', 'colType', 'colPlot', 'colVp', 'colVpFreeze', 'colVpColor', 'colDesc', 'colMore']
const layers = [
  { name: 'penta...', color: '#7ff4f4' },
  { name: 'quadr...', color: '#ee4426' },
  { name: 'ret_ou...', color: '#ef52f5' },
  { name: 'ret_r2', color: '#1433f5' },
  { name: 'triang...', color: '#6cf748' },
]

const props = ref([
  { label: 'Color', kind: 'select', value: 'ByLayer', swatch: '#f4a0f8' },
  { label: 'Layer', kind: 'select', value: 'legendas' },
  { label: 'Linetype', kind: 'select', value: 'ByLayer', line: true },
  { label: 'Linetype scale', kind: 'text', value: '1.000' },
  { label: 'Lineweight', kind: 'select', value: 'ByLayer' },
  { label: 'Transparency', kind: 'range' },
  { label: 'Text style', kind: 'select', value: 'rd' },
  { label: 'Dimension style', kind: 'select', value: 'Standard' },
  { label: 'Multileader style', kind: 'select', value: 'Standard' },
  { label: 'Table style', kind: 'select', value: 'Standard' },
  { label: 'Annotation scale', kind: 'select', value: '1:1' },
  { label: 'Text height', kind: 'text', value: '0.005', pick: true },
  { label: 'Plot style', kind: 'select', value: 'ByColor' },
  { label: 'Plot style table', kind: 'select', value: 'None' },
  { label: 'Plot style attached to', kind: 'text', value: 'A3', off: true },
  { label: 'Plot table type', kind: 'text', value: 'Not available', off: true },
])

const modes = ['model', 'ortho', 'polar', 'dynamic', 'weight', 'checkerMode', 'snap', 'track', 'ucs', 'prev', 'viewport', 'next', 'annoVis', 'annoAuto', 'iso', 'gear']
const activeModes = ['polar', 'checkerMode', 'snap', 'track']
</script>

<style>
body {
  margin: 0;
  background: #4b4524;
}
</style>

<style scoped>
* {
  box-sizing: border-box;
}

.app {
  display: flex;
  flex-direction: column;
  height: 100vh;
  overflow: hidden;
  font-family: Inter, "Liberation Sans", sans-serif;
  font-size: 22px;
  color: #f2f3f6;
}

button,
input,
select {
  font: inherit;
  color: inherit;
  background: none;
  border: 0;
  padding: 0;
  margin: 0;
  outline: none;
}

h1,
h2 {
  margin: 0;
  font-size: 24px;
  font-weight: 500;
}

.icon {
  display: block;
  flex: none;
  width: 32px;
  height: 32px;
  overflow: visible;
}

.tool {
  position: relative;
  width: 32px;
  height: 32px;
}

/* Header */
.header {
  flex: none;
  background: #3c4452;
  border-bottom: 2px solid #262b37;
  padding-bottom: 3px;
}

.titlebar {
  display: grid;
  grid-template-columns: 1fr auto 1fr;
  align-items: center;
  height: 42px;
}

.lights {
  display: flex;
  gap: 16px;
  padding-left: 6px;
}

.light {
  width: 24px;
  height: 24px;
  border-radius: 50%;
}

.red {
  background: radial-gradient(circle, #7a0f0c 4px, #ee6a5f 5px);
}

.yellow {
  background: #f5bf4f;
}

.green {
  background: #62c655;
}

.title {
  display: flex;
  align-items: center;
  padding: 0 12px 2px 0;
  font-size: 26px;
  font-weight: 700;
  color: #a5a9b5;
}

.title .icon {
  margin-right: 8px;
}

.file {
  margin-left: 26px;
}

.user {
  position: relative;
  display: flex;
  align-items: center;
  justify-self: end;
  align-self: start;
  width: 239px;
  height: 36px;
  padding: 0 0 6px 8px;
  gap: 8px;
  font-size: 23px;
  white-space: nowrap;
  background: #4f586d;
  border-left: 2px solid #2b303c;
  border-bottom: 2px solid #2b303c;
  overflow: hidden;
}

.user-arrow {
  position: absolute;
  right: 8px;
  top: 8px;
  width: 14px;
  height: 14px;
  color: #c8cbd2;
}

.toolbar {
  display: flex;
  justify-content: center;
  align-items: center;
  gap: 96px;
  height: 60px;
  padding-right: 10px;
}

.group {
  display: flex;
  gap: 34px;
}

.badge {
  position: absolute;
  right: -16px;
  top: -5px;
  width: 20px;
  height: 20px;
  border-radius: 50%;
  background: #e8743b;
  border: 2px solid #fff;
}

/* Tabs under the toolbar */
.strip {
  display: flex;
  flex: none;
  height: 46px;
  background: #3c4453;
}

.strip-left {
  display: flex;
  width: 172px;
}

.strip-files {
  display: flex;
  flex: 1;
}

.strip-right {
  display: flex;
  width: 896px;
}

.cell {
  position: relative;
  display: flex;
  align-items: center;
  justify-content: center;
  width: 48px;
  border-right: 2px solid #2a2f3b;
  border-bottom: 2px solid #232834;
}

.cell.dark {
  background: #2f333e;
}

.cell.active {
  border-bottom-color: #3c4452;
}

.strip-left .cell {
  width: 68px;
}

.strip-left .cell.active {
  width: 57px;
  justify-content: flex-start;
  padding-left: 7px;
}

.strip-left .more {
  width: 47px;
}

.square .icon {
  width: 30px;
  height: 30px;
}

.file-tab {
  width: 266px;
  padding-left: 4px;
  justify-content: flex-start;
  font-weight: 600;
  font-size: 21px;
  background: #4f586d;
}

.cell.filler {
  flex: 1;
}

.panel-tab {
  width: 105px;
}

.tab-badge {
  right: 26px;
  top: -3px;
  z-index: 1;
}

/* Work area */
.body {
  display: flex;
  flex: 1;
  min-height: 0;
}

.sidebar {
  width: 170px;
  overflow: hidden;
  background: #3c4452;
}

.section {
  width: 162px;
  padding: 6px 0 10px;
  border-bottom: 2px solid #262b37;
}

.section:first-child {
  padding-top: 4px;
}

.section-head {
  display: flex;
  align-items: center;
  justify-content: space-between;
  height: 34px;
  padding-right: 3px;
}

.section-toggle {
  display: flex;
  align-items: center;
  gap: 10px;
  font-family: "Liberation Sans", sans-serif;
  font-size: 20px;
}

.section-toggle .icon {
  width: 14px;
  height: 14px;
}

.gear .icon {
  width: 18px;
  height: 18px;
}

.tools {
  display: grid;
  grid-template-columns: repeat(3, 32px);
  grid-auto-rows: 64px;
  column-gap: 28px;
  align-items: center;
  padding-left: 4px;
}

.flyout {
  position: absolute;
  right: -6px;
  bottom: -6px;
  border-left: 8px solid transparent;
  border-bottom: 8px solid #a3a5aa;
}

.canvas {
  display: flex;
  flex-direction: column;
  align-items: center;
  position: relative;
  flex: 1;
  min-width: 0;
  background: #8a8a8a;
}

.drawing {
  width: 100%;
  height: 100%;
  min-height: 0;
}

.legend {
  font-family: Lato, sans-serif;
  font-size: 33px;
  fill: #e98cf0;
}

.command {
  position: absolute;
  bottom: 0;
  display: flex;
  align-items: center;
  width: 1000px;
  height: 50px;
  padding: 0 20px 0 14px;
  background: #3c4452;
}

.command input {
  flex: 1;
  margin-left: 43px;
  font-style: italic;
  font-size: 23px;
}

.command input::placeholder {
  color: #9a9fa9;
  opacity: 1;
}

.cmd-up {
  width: 12px;
  height: 12px;
  margin-right: 22px;
  color: #9a9fa9;
}

.command .icon:last-child {
  width: 28px;
  height: 28px;
}

/* Right panel */
.panel {
  display: flex;
  flex-direction: column;
  width: 896px;
  padding: 0 16px 0 20px;
  background: #3c4452;
  overflow: hidden;
}

.panel-head {
  display: flex;
  align-items: flex-start;
  flex: none;
}

.layers-head {
  height: 65px;
}

.layers-head h2 {
  width: 221px;
}

.layer-tools {
  display: flex;
  flex: 1;
  gap: 16px;
  padding-top: 11px;
}

.pin .icon {
  width: 28px;
  height: 32px;
}

.combo {
  display: flex;
  align-items: center;
  position: relative;
  height: 36px;
  width: 100%;
  flex: none;
  background: #515a6e;
  border: 2px solid #323b43;
  border-radius: 4px;
}

.combo select {
  appearance: none;
  flex: 1;
  align-self: stretch;
  padding: 0 34px 0 11px;
  color: #fff;
  opacity: 1;
}

.arrow {
  position: absolute;
  right: 7px;
  width: 14px;
  height: 14px;
  color: #dcdee3;
  pointer-events: none;
}

.combo.tall {
  height: 52px;
}

.state {
  margin-top: 4px;
}

.st {
  width: 20px;
  height: 20px;
  margin-left: 14px;
}

.st:first-child {
  margin-left: 16px;
}

.st.wide {
  width: 24px;
  height: 24px;
  margin: 0 -2px 0 12px;
}

.st + .swatch {
  margin-left: 14px;
}

.st.vp {
  width: 26px;
  height: 26px;
  margin-left: 12px;
}

.combo .vp + select {
  padding-left: 20px;
}

.swatch {
  flex: none;
  width: 18px;
  height: 18px;
  border: 2px solid #000;
}

.hide-list {
  display: flex;
  align-items: center;
  flex: none;
  gap: 24px;
  height: 51px;
  margin-bottom: 5px;
  padding-left: 6px;
  color: #bcc0c8;
}

.hide-list .icon {
  width: 18px;
  height: 18px;
}

.layer-list {
  display: grid;
  grid-template-columns: 1fr 32px;
  grid-template-rows: 215px 32px;
  flex: none;
  margin-right: 4px;
  border: 1px solid #333a47;
}

.layer-list table {
  display: block;
}

thead {
  display: block;
  background: #2f333e;
  border-bottom: 2px solid #262a35;
}

tr {
  display: grid;
  grid-template-columns: 66px 114px 45px 44px 1fr 1fr 44px 44px 44px 44px 1fr 1fr;
  align-items: center;
}

thead tr {
  height: 46px;
}

th {
  display: flex;
  align-items: center;
  justify-content: center;
  height: 100%;
  padding: 0;
  border-right: 1px solid #272b35;
}

th .icon {
  width: 20px;
  height: 20px;
}

th.colOn .icon,
th.colLock .icon,
th.colVpFreeze .icon {
  width: 24px;
  height: 24px;
}

th.colName {
  gap: 12px;
  background: linear-gradient(#4a5366, #4f586d);
  position: relative;
  font-weight: 600;
}

th.colName::after {
  content: "";
  position: absolute;
  bottom: -1px;
  left: 50px;
  border: 6px solid transparent;
  border-top: 0;
  border-bottom: 9px solid #4f96ee;
}

tbody {
  display: flex;
  flex-direction: column;
  justify-content: flex-end;
  height: 167px;
  overflow: hidden;
  background: #4f596b;
  font-weight: 500;
}

tbody tr {
  flex: none;
  height: 38px;
}

td {
  display: flex;
  align-items: center;
  padding: 0;
}

.name {
  gap: 16px;
}

.vis {
  padding-left: 30px;
}

.dot {
  width: 16px;
  height: 16px;
  border-radius: 50%;
  background: #dcdcdc;
}

.de {
  padding-left: 13px;
}

.ln {
  padding-left: 14px;
}

.sw {
  padding-left: 7px;
}

.line {
  flex: none;
  width: 64px;
  height: 2px;
  background: #fff;
}

.vscroll {
  display: flex;
  align-items: flex-end;
  justify-content: center;
  padding-bottom: 4px;
}

.vscroll i {
  width: 10px;
  height: 73px;
  border-radius: 5px;
  background: #878d96;
}

.hscroll {
  display: flex;
  align-items: center;
  padding: 2px 0 0 4px;
}

.hscroll i {
  width: 74%;
  height: 10px;
  border-radius: 5px;
  background: #878d96;
}

.corner {
  background: #fafafa;
}

.list-actions {
  display: flex;
  align-items: center;
  flex: none;
  gap: 28px;
  height: 49px;
  padding: 0 6px 0 13px;
}

.minus {
  margin-left: auto;
  margin-right: -4px;
}

.cols {
  position: relative;
  display: flex;
  align-items: center;
  width: 50px;
}

.cols .icon:first-child {
  width: 28px;
  height: 28px;
}

.cols .arrow {
  right: 5px;
  width: 12px;
  height: 12px;
}

.search {
  display: flex;
  align-items: center;
  flex: none;
  height: 40px;
  margin: 1px 5px 18px 2px;
  padding-left: 8px;
  border-radius: 10px;
  background: #fff;
  color: #222;
}

.search .icon {
  width: 34px;
  height: 34px;
}

.search input {
  flex: 1;
  padding-left: 12px;
  font-size: 25px;
}

.search input::placeholder {
  color: #bdbdbd;
  opacity: 1;
}

.props-head {
  height: 50px;
  margin: 0 -16px 0 -20px;
  padding: 0 16px 0 20px;
  border-top: 2px solid #262b37;
}

.toggle {
  display: flex;
  margin: 2px 18px 0 auto;
  border: 2px solid #2f3541;
  font-size: 19px;
}

.toggle button {
  width: 56px;
  height: 24px;
  color: #878c97;
}

.toggle .on {
  background: #4f586d;
  color: #fff;
}

.props-head .tool {
  width: 30px;
  margin-right: 18px;
}

.props-head .tool .icon {
  width: 30px;
  height: 30px;
}

.space {
  width: auto;
  height: 40px;
  margin: 0 5px 14px 2px;
}

.combo.off {
  background: #444c5d;
  border-color: #414857;
  color: #8c919c;
}

.combo.off select,
.combo.off .arrow {
  color: #868b97;
}

.props {
  display: flex;
  flex: 1;
  min-height: 0;
  padding-right: 4px;
}

.prop-list {
  flex: 1;
}

.prop {
  display: flex;
  align-items: center;
  height: 36px;
  margin-bottom: 10px;
}

.prop label {
  flex: 1;
  padding-right: 21px;
  text-align: right;
  color: #cfd2d7;
}

.field {
  display: flex;
  gap: 7px;
  width: 418px;
}

.lead {
  margin-left: 15px;
}

.lead.line {
  margin-left: 13px;
}

.combo .lead + select {
  padding-left: 22px;
}

.combo .lead.line + select {
  padding-left: 28px;
}

.text {
  flex: 1;
  min-width: 0;
  height: 36px;
  padding: 2px 0 0 6px;
  background: #515a6e;
  border: 2px solid #323b43;
  border-radius: 4px;
  color: #fff;
}

.text:disabled {
  background: #444c5d;
  border-color: #414857;
  color: #868b97;
}

.slider {
  display: flex;
  align-items: center;
  flex: 1;
  height: 34px;
  margin-left: 6px;
  border: 2px solid #323b43;
  background: linear-gradient(#7d8492, #7d8492) no-repeat 49% 16px / 2px 12px #515a6e;
}

.slider input {
  appearance: none;
  flex: 1;
  min-width: 0;
  height: 28px;
}

.slider input::-webkit-slider-thumb {
  appearance: none;
  width: 3px;
  height: 28px;
  background: linear-gradient(#5c93e0 6px, transparent 6px, transparent 22px, #5c93e0 22px);
}

.slider output {
  padding: 2px 5px 0 0;
}

.checker {
  position: relative;
  display: flex;
  align-items: center;
  width: 76px;
  height: 36px;
  padding-left: 12px;
  background: #515a6e;
  border: 2px solid #323b43;
  border-radius: 4px;
  color: #dcdee3;
}

.checker .icon:first-child {
  width: 28px;
  height: 28px;
}

.pick {
  width: 38px;
  height: 36px;
  padding-left: 1px;
  border: 2px solid #323b43;
}

.props-scroll {
  width: 25px;
  padding-left: 15px;
}

.props-scroll i {
  display: block;
  width: 10px;
  height: 618px;
  border-radius: 5px;
  background: #868b97;
}

/* Footer */
.footer {
  display: flex;
  flex: none;
  height: 47px;
  background: linear-gradient(#3d4454, #353e4b);
  border-radius: 0 0 16px 16px;
  overflow: hidden;
}

.side-actions {
  display: flex;
  align-items: center;
  width: 170px;
  padding: 4px 0 0 16px;
  gap: 28px;
  background: #3c4452;
}

.status {
  display: flex;
  flex: 1;
  align-items: center;
  padding-right: 10px;
  border-top: 2px solid #262b37;
  border-bottom: 1px solid #262b37;
}

.layout {
  width: 118px;
  height: 100%;
  padding-bottom: 2px;
  color: #a9adb7;
  border-right: 2px solid #262b37;
}

.layout.model {
  width: 120px;
}

.layout.add {
  display: flex;
  align-items: center;
  justify-content: center;
  width: 47px;
}

.layout.current {
  background: #4b566b;
  color: #fff;
  font-weight: 600;
}

.coords {
  margin-left: auto;
  padding-right: 8px;
  color: #b5b8c0;
}

.modes {
  display: flex;
  gap: 4px;
}

.mode {
  display: flex;
  align-items: center;
  justify-content: center;
  width: 40px;
  height: 40px;
  color: #d9d9d9;
}

.mode.on {
  background: #6285b8;
  color: #fff;
}

.mode.small {
  width: 34px;
}

.wallpaper {
  flex: none;
  height: 3px;
  background: linear-gradient(90deg, #5e5722, #45402a 40%, #2f2c27 60%, #5b5530);
}
</style>
